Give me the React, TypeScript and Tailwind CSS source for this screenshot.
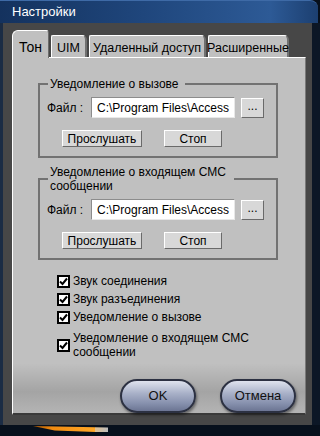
import React from 'react';

const font = { fontFamily: '"Liberation Sans", Arial, sans-serif' };

function Tab({ label, width, active }: { label: string; width: string; active?: boolean }) {
    if (active) {
        return (
            <div className={`${width} h-[28px] -mb-px relative z-10 bg-[#c0c0c0] border-l border-t border-white rounded-tl-[6px] rounded-tr-[3px] border-r border-r-[#6c6c6c] flex items-start justify-center pt-[6px] text-[14px] text-black whitespace-nowrap`}>
                {label}
            </div>
        );
    }
    return (
        <div className={`${width} h-[22px] bg-[#c0c0c0] border-l border-t border-white border-r-2 border-r-[#707070] rounded-tr-[5px] rounded-tl-[2px] flex items-center justify-center pt-[3px] text-[12.5px] text-black whitespace-nowrap`}>
            {label}
        </div>
    );
}

function SmallButton({ label, width, className = '' }: { label: string; width: string; className?: string }) {
    return (
        <div
            className={`h-[17px] ${width} ${className} bg-[#d8d8d8] border border-t-white border-l-white border-b-[#6a6a6a] border-r-[#6a6a6a] flex items-center justify-center text-[12px] text-black`}
        >
            {label}
        </div>
    );
}

function FileGroup({ title, legendWidth }: { title: string; legendWidth: string }) {
    return (
        <fieldset className="w-[240px] ml-[25px] border-2 border-[#727272] pl-[7px] pb-[9px]">
            <legend className={`ml-[1px] px-[2px] ${legendWidth} text-[12px] leading-[14px] text-black`}>{title}</legend>
            <div className="flex items-center mt-[6px]">
                <span className="w-[44px] text-[12px] text-black">Файл :</span>
                <div className="w-[144px] h-[21px] bg-white border border-[#8c8c8c] border-b-[#e8e8e8] border-r-[#e8e8e8] flex items-center pl-[5px] text-[12px] text-black whitespace-nowrap overflow-hidden">
                    C:\Program Files\Access
                </div>
                <div className="w-[23px] h-[20px] ml-[6px] bg-[#d8d8d8] border border-t-white border-l-white border-b-[#6a6a6a] border-r-[#6a6a6a] flex items-center justify-center text-[12px] text-black pb-[4px]">
                    ...
                </div>
            </div>
            <div className="flex mt-[12px]">
                <SmallButton label="Прослушать" width="w-[80px]" className="ml-[15px]" />
                <SmallButton label="Стоп" width="w-[58px]" className="ml-[22px]" />
            </div>
        </fieldset>
    );
}

function Check({ label, className = '' }: { label: string; className?: string }) {
    return (
        <div className={`flex items-center ${className}`}>
            <div className="w-[13px] h-[13px] bg-white border-2 border-black flex items-center justify-center shrink-0">
                <svg width="9" height="9" viewBox="0 0 9 9">
                    <path d="M1 4.5 L3.5 7 L8 1.5" stroke="#000" strokeWidth="2" fill="none" />
                </svg>
            </div>
            <span className="ml-[3px] w-[190px] text-[12px] leading-[14px] text-black">{label}</span>
        </div>
    );
}

function PillButton({ label }: { label: string }) {
    return (
        <div className="w-[76px] h-[34px] rounded-full border-2 border-[#2c3142] bg-[linear-gradient(to_bottom,#dfe3ee_0%,#aab2c9_40%,#8690ad_75%,#6c7593_100%)] shadow-[1px_2px_3px_rgba(0,0,0,0.45)] flex items-center justify-center text-[13px] text-[#111]">
            {label}
        </div>
    );
}

export default function App() {
    return (
        <div className="w-[320px] h-[436px] bg-[#07101c] flex flex-col overflow-hidden" style={font}>
            {/* Title bar */}
            <div className="h-[23px] mr-[2px] rounded-tr-[8px] bg-[linear-gradient(to_right,#14325e_0%,#1f467c_45%,#2d5a96_85%,#1c3f70_100%)] border-t border-[#3e6aa6] flex items-center pl-[12px] text-[13px] text-white">
                Настройки
            </div>

            {/* Frame */}
            <div className="flex-1 flex border-l-[3px] border-[#1b2c44] border-r-[8px] border-r-[#0c1726] bg-[#474747] pt-[7px] pb-[10px] pl-[9px] pr-[6px]">
                <div className="flex flex-col w-full">
                    {/* Tabs */}
                    <div className="flex items-end gap-[2px] h-[27px]">
                        <Tab label="Тон" width="w-[37px]" active />
                        <Tab label="UIM" width="w-[36px]" />
                        <Tab label="Удаленный доступ" width="w-[117px]" />
                        <Tab label="Расширенные" width="w-[81px]" />
                    </div>

                    {/* Panel */}
                    <div className="flex-1 flex flex-col border-t border-l border-white border-r border-r-[#7a7a7a] border-b-2 border-b-[#3a3a3a] bg-[linear-gradient(to_bottom,#c0c0c0_0%,#c0c0c0_86%,#a4a4a4_94%,#b4b4b4_100%)]">
                        <div className="mt-[19px]">
                            <FileGroup title="Уведомление о вызове" legendWidth="w-auto pr-[6px]" />
                        </div>
                        <div className="mt-[7px]">
                            <FileGroup title="Уведомление о входящем СМС сообщении" legendWidth="w-[186px]" />
                        </div>

                        <div className="ml-[44px] mt-[14px] flex flex-col gap-[4px]">
                            <Check label="Звук соединения" />
                            <Check label="Звук разъединения" />
                            <Check label="Уведомление о вызове" />
                            <Check label="Уведомление о входящем СМС сообщении" className="mt-[3px]" />
                        </div>

                        <div className="mt-auto mb-0 flex justify-end gap-[24px] mr-[9px]">
                            <PillButton label="OK" />
                            <PillButton label="Отмена" />
                        </div>
                    </div>
                </div>
            </div>

            {/* Bottom strip */}
            <div className="h-[11px] flex items-start pt-[1px]">
                <div className="ml-[33px] w-[62px] h-[6px] bg-[linear-gradient(to_right,#a05000_0%,#f08a10_30%,#ffa828_100%)] [clip-path:polygon(0%_0%,100%_20%,100%_100%,35%_75%)]" />
                <div className="w-[13px] h-[6px] bg-[linear-gradient(to_right,#e0c090_0%,#bcbcbc_100%)] [clip-path:polygon(0%_20%,100%_25%,100%_100%,0%_100%)]" />
            </div>
        </div>
    );
}
